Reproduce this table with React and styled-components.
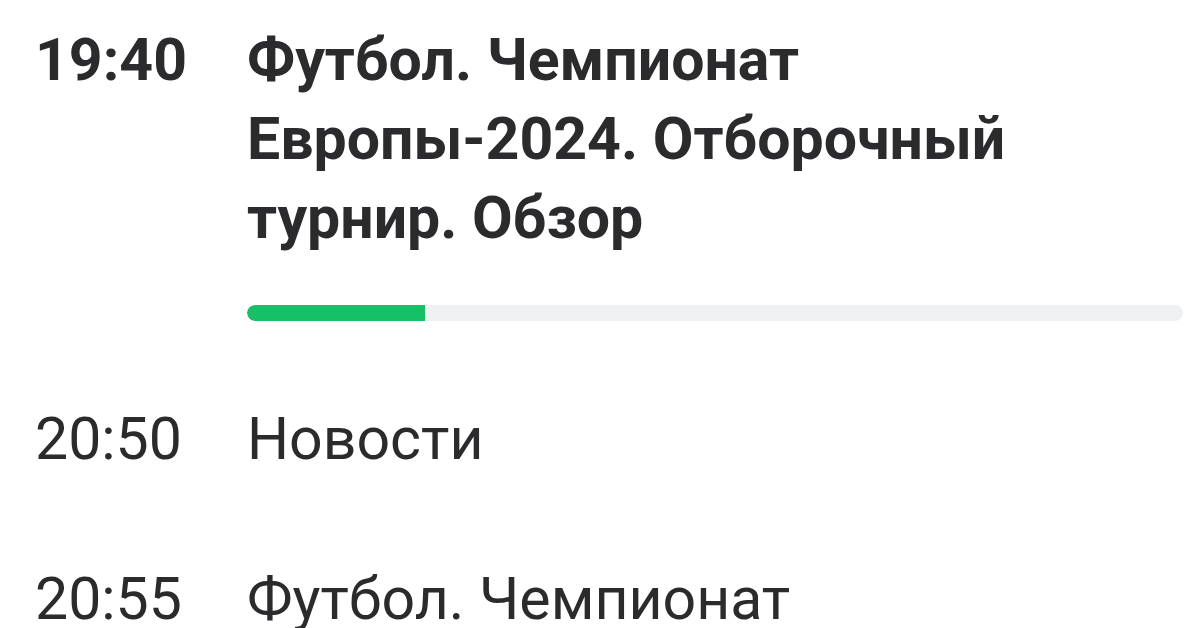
import React from "react";
import styled, { createGlobalStyle } from "styled-components";

const Global = createGlobalStyle`
  html, body { margin: 0; padding: 0; background: #ffffff; }
  body { font-family: Roboto, "Noto Sans", sans-serif; color: #2b2b2d; overflow: hidden; }
`;

const List = styled.div`
  display: flex;
  flex-direction: column;
  padding: 20px 17px 0 35px;
`;

const Row = styled.div`
  display: grid;
  grid-template-columns: 212px 1fr;
  padding-bottom: ${(p) => p.$gap}px;
`;

const Time = styled.div`
  font-size: 59px;
  line-height: 79px;
  font-weight: ${(p) => (p.$active ? 700 : 400)};
`;

const Body = styled.div`
  display: flex;
  flex-direction: column;
`;

const Title = styled.div`
  font-size: 59px;
  line-height: 79px;
  font-weight: ${(p) => (p.$active ? 700 : 400)};
`;

const Track = styled.div`
  margin-top: 48px;
  height: 16px;
  border-radius: 8px;
  background: #eff0f2;
  overflow: hidden;
`;

const Fill = styled.div`
  height: 100%;
  background: #17c067;
  border-radius: 8px 0 0 8px;
`;

const items = [
  { time: "19:40", title: "Футбол. Чемпионат Европы-2024. Отборочный турнир. Обзор", active: true, progress: 19 },
  { time: "20:50", title: "Новости" },
  { time: "20:55", title: "Футбол. Чемпионат" },
];

export default function App() {
  return (
    <>
      <Global />
      <List>
        {items.map((it, i) => (
          <Row key={i} $gap={i === 0 ? 78 : 81}>
            <Time $active={it.active}>{it.time}</Time>
            <Body>
              <Title $active={it.active}>{it.title}</Title>
              {it.progress != null && (
                <Track>
                  <Fill style={{ width: `${it.progress}%` }} />
                </Track>
              )}
            </Body>
          </Row>
        ))}
      </List>
    </>
  );
}
